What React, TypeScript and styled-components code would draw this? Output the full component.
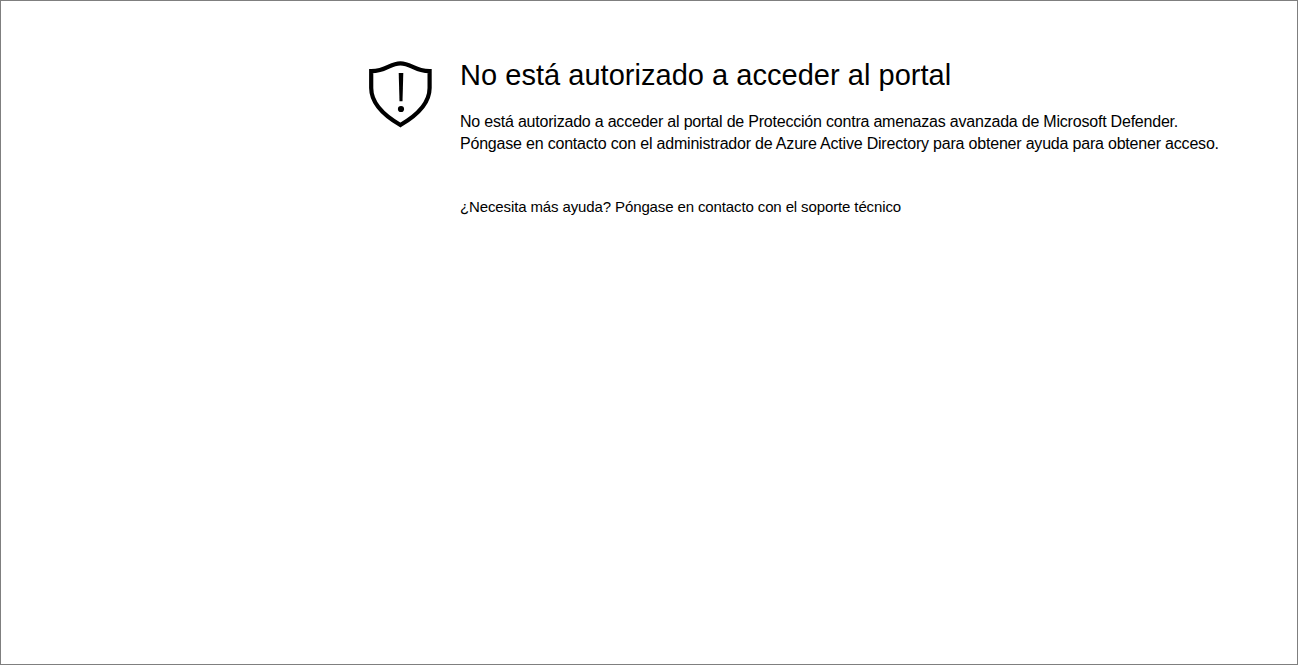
import React from "react";
import styled, { createGlobalStyle } from "styled-components";

const GlobalStyle = createGlobalStyle`
  * { box-sizing: border-box; }
  body { margin: 0; background: #fff; }
`;

const Page = styled.main`
  display: flex;
  align-items: flex-start;
  gap: 28px;
  width: 100vw;
  height: 100vh;
  padding: 57px 0 0 367px;
  overflow: hidden;
  border: 1px solid #7f7f7f;
  background: #fff;
  color: #000;
  font-family: "Liberation Sans", Arial, sans-serif;
`;

const ShieldIcon = styled.svg`
  flex: none;
  width: 64px;
  height: 70px;
  margin-top: 1px;
`;

const Content = styled.section`
  display: flex;
  flex-direction: column;
  align-items: flex-start;
  white-space: nowrap;
`;

const Title = styled.h1`
  margin: 0;
  font-size: 29px;
  font-weight: 400;
  line-height: 34px;
  letter-spacing: 0.03px;
`;

const Line = styled.p<{ $tracking: string }>`
  margin: 0;
  font-size: 16px;
  line-height: 22px;
  letter-spacing: ${(p) => p.$tracking};
`;

const Message = styled.div`
  margin-top: 19px;
`;

const Help = styled.p`
  margin: 42px 0 0;
  font-size: 15px;
  line-height: 20px;
  letter-spacing: -0.12px;
`;

export default function App() {
  return (
    <>
      <GlobalStyle />
      <Page>
        <ShieldIcon viewBox="0 0 64 70" fill="none" stroke="#000" aria-hidden="true">
          <path
            d="M3.2 12.2C19 12.2 21.5 4.3 32.4 4.3C43.3 4.3 46 12.2 61.6 12.2V29C61.6 43 50.5 55.5 32.4 66C14.3 55.5 3.2 43 3.2 29Z"
            strokeWidth="4.2"
          />
          <path d="M30.7 14H35.3L34.5 42.3H31.5Z" fill="#000" stroke="none" />
          <circle cx="33" cy="50" r="3.1" fill="#000" stroke="none" />
        </ShieldIcon>
        <Content>
          <Title>No está autorizado a acceder al portal</Title>
          <Message>
            <Line $tracking="-0.21px">
              No está autorizado a acceder al portal de Protección contra amenazas avanzada de Microsoft Defender.
            </Line>
            <Line $tracking="-0.2px">
              Póngase en contacto con el administrador de Azure Active Directory para obtener ayuda para obtener acceso.
            </Line>
          </Message>
          <Help>¿Necesita más ayuda? Póngase en contacto con el soporte técnico</Help>
        </Content>
      </Page>
    </>
  );
}
